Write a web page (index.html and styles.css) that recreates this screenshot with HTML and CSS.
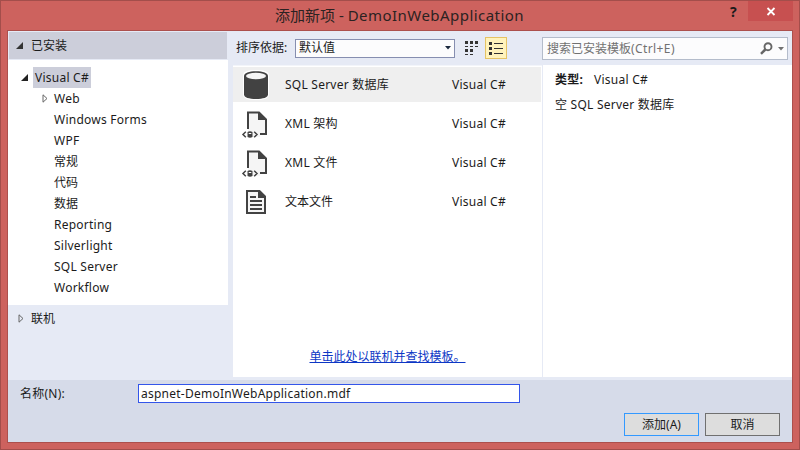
FILE: index.html
```
<!DOCTYPE html>
<html lang="zh-CN">
<head>
<meta charset="utf-8">
<title>添加新项 - DemoInWebApplication</title>
<link rel="stylesheet" href="styles.css">
</head>
<body>
<div class="window">
  <header class="titlebar">
    <h1 class="title">添加新项 - <span class="title-name">DemoInWebApplication</span></h1>
    <span class="help">?</span>
    <button class="close" aria-label="关闭"><svg width="10" height="9" viewBox="0 0 10 9"><path d="M1.500 1l7 7M8.500 1l-7 7" stroke="#fff" stroke-width="1.800"/></svg></button>
  </header>
  <div class="client">
    <main class="main">
      <nav class="sidebar">
        <div class="group open"><svg class="arrow" width="7" height="7"><path d="M7 0v7H0z" fill="#333"/></svg><span>已安装</span></div>
        <ul class="tree">
          <li class="root"><svg class="arrow" width="7" height="7"><path d="M7 0v7H0z" fill="#222"/></svg><span class="selected">Visual C#</span></li>
          <li class="expandable"><svg class="arrow" width="6" height="9"><path d="M1 .8v7.400l4-3.700z" fill="none" stroke="#666"/></svg>Web</li>
          <li>Windows Forms</li>
          <li>WPF</li>
          <li class="zh">常规</li>
          <li class="zh">代码</li>
          <li class="zh">数据</li>
          <li>Reporting</li>
          <li>Silverlight</li>
          <li>SQL Server</li>
          <li>Workflow</li>
        </ul>
        <div class="group online"><svg class="arrow" width="6" height="9"><path d="M1 .8v7.400l4-3.700z" fill="none" stroke="#666"/></svg><span>联机</span></div>
      </nav>
      <section class="templates">
        <div class="toolbar">
          <label class="zh">排序依据:</label>
          <div class="select zh"><span>默认值</span><svg width="6" height="4"><path d="M0 0h6L3 3.500z" fill="#1b293e"/></svg></div>
          <svg class="view" width="13" height="14" fill="#333"><path d="M0 0h3v3H0zM5 0h3v3H5zM10 0h3v3h-3zM0 8h3v3H0zM5 8h3v3H5z"/><path d="M0 5h3v1H0zM5 5h3v1H5zM10 5h3v1h-3zM0 13h3v1H0zM5 13h3v1H5z"/></svg>
          <div class="view-active"><svg width="14" height="13" fill="#333"><path d="M0 0h3v3H0zM0 5h3v3H0zM0 10h3v3H0zM5 1h9v1H5zM5 6h9v1H5zM5 11h9v1H5z"/></svg></div>
        </div>
        <div class="list">
          <div class="row active">
            <svg class="icon" width="32" height="32"><path d="M3 6q0-5 13-5t13 5v20q0 5-13 5T3 26z" fill="#fff"/><path d="M4 7c0-3 5-4.800 12-4.800S28 4 28 7v18.500c0 3-5 4.500-12 4.500S4 28.500 4 25.500z" fill="#424242"/><ellipse cx="16" cy="7" rx="10" ry="3.200" fill="#f5f5f5"/></svg>
            <span class="name">SQL Server 数据库</span><span class="lang">Visual C#</span>
          </div>
          <div class="row">
            <svg class="icon" width="32" height="32"><use href="#xml-file"/></svg>
            <span class="name">XML 架构</span><span class="lang">Visual C#</span>
          </div>
          <div class="row">
            <svg class="icon" width="32" height="32"><use href="#xml-file"/></svg>
            <span class="name">XML 文件</span><span class="lang">Visual C#</span>
          </div>
          <div class="row">
            <svg class="icon" width="32" height="32"><path d="M7 5h12.500L25 10.500V27H7z" fill="#f5f5f5" stroke="#424242" stroke-width="2"/><path d="M18 4v8h8zM10 10h6v2h-6zM10 14h12v2H10zM10 18h12v2H10zM10 22h12v2H10z" fill="#424242"/></svg>
            <span class="name zh">文本文件</span><span class="lang">Visual C#</span>
          </div>
          <a class="find" href="#">单击此处以联机并查找模板。</a>
        </div>
      </section>
      <aside class="details">
        <div class="search-wrap"><div class="search"><span class="hint">搜索已安装模板<span class="key">(Ctrl+E)</span></span>
          <svg width="13" height="13"><circle cx="8" cy="4.700" r="3.500" fill="none" stroke="#666" stroke-width="1.900"/><path d="M5.300 7.500L1 11.800" stroke="#666" stroke-width="2.500"/></svg>
          <svg class="caret" width="6" height="4"><path d="M0 0h6L3 3.500z" fill="#717171"/></svg></div></div>
        <div class="info">
          <p><b>类型:</b><span class="type">Visual C#</span></p>
          <p>空 SQL Server 数据库</p>
        </div>
      </aside>
    </main>
    <footer class="footer">
      <div class="name-row"><label>名称(N):</label><div class="field">aspnet-DemoInWebApplication.mdf</div></div>
      <div class="actions"><button class="btn primary">添加(A)</button><button class="btn">取消</button></div>
    </footer>
  </div>
</div>
<svg class="defs" width="0" height="0">
  <symbol id="xml-file" viewBox="0 0 32 32">
    <path d="M8 22V5h11l7 6v16h-6V29H8z" fill="#f5f5f5"/>
    <path d="M8 21V4.500h11L26 11.500V26h-6" fill="none" stroke="#424242" stroke-width="2"/><path d="M18 4l9 8h-9z" fill="#424242"/>
    <path d="M5.800 23.800L3 26.500l2.800 2.700M14.200 23.800l2.800 2.700-2.800 2.700" fill="none" stroke="#424242" stroke-width="1.500"/>
    <path d="M7.500 24q2.500-1.500 5 0v5q-2.500 1.300-5 0z" fill="#424242"/><path d="M8.700 25h2.600v1H8.700z" fill="#fff"/>
  </symbol>
</svg>
</body>
</html>
```

FILE: styles.css
```
* { box-sizing: border-box; }
body { margin: 0; font: 12px/20px "Noto Sans", "Noto Sans CJK SC", sans-serif; color: #1b1b1b; letter-spacing: 0.24px; }
h1, p, ul { margin: 0; padding: 0; font-weight: normal; }
ul { list-style: none; }
svg { display: block; flex: none; }
button { padding: 0; font: inherit; color: inherit; }
.zh { letter-spacing: 0; }
.defs { position: absolute; }
.window { width: 800px; height: 450px; display: flex; flex-direction: column; background: #cd625e; border: 1px solid #a34e4b; padding: 0 6px 6px; }
.titlebar { height: 29px; display: flex; align-items: flex-start; }
.title { flex: 1; padding: 3px 0 0 268px; font-size: 15px; line-height: 22px; letter-spacing: 0; white-space: nowrap; color: #2b2222; }
.title-name { letter-spacing: 0.46px; }
.help { width: 18px; font: bold 14px/21px "Noto Sans"; }
.close { width: 45px; height: 20px; border: 0; background: #c75050; display: flex; align-items: center; justify-content: center; }
.client { flex: 1; display: flex; flex-direction: column; border: 1px solid #ac504d; background: #e6eaf5; min-height: 0; }
.main { height: 349px; display: grid; grid-template-columns: 225px 309px 250px; }
.sidebar { display: flex; flex-direction: column; }
.group { display: flex; align-items: center; height: 27px; letter-spacing: 0; }
.open { margin: 1px 6px 1px 1px; background: #ccceda; padding-left: 7px; }
.open span { margin-left: 8px; }
.online { padding-left: 10px; }
.online span { margin-left: 7px; }
.tree { width: 220px; height: 245px; background: #fff; padding-top: 7px; }
.tree li { height: 21px; line-height: 21px; padding-left: 46px; }
.tree .root { display: flex; align-items: center; padding-left: 13px; }
.selected { margin-left: 5px; padding: 0 2px; background: #ccceda; }
.tree .expandable { display: flex; align-items: center; padding-left: 34px; }
.expandable svg { margin-right: 6px; }
.templates { display: flex; flex-direction: column; }
.toolbar { height: 34px; padding-left: 3px; display: flex; align-items: center; }
.toolbar label { width: 59px; }
.select { width: 160px; height: 19px; border: 1px solid #868eb0; background: #fcfcfd; padding: 0 3px; display: flex; align-items: center; justify-content: space-between; }
.view { margin: 0 7px 0 10px; }
.view-active { width: 22px; height: 22px; border: 1px solid #e5c365; background: #fff3bc; display: flex; align-items: center; justify-content: center; }
.list { height: 312px; background: #fff; padding-top: 1px; display: flex; flex-direction: column; border-top: 1px solid #f3f5fa; }
.row { height: 35px; margin-bottom: 4px; display: flex; align-items: center; }
.active { background: #efefef; margin-right: 1px; }
.icon { margin-left: 7px; }
.name { margin-left: 13px; width: 167px; }
.find { margin-top: 124px; align-self: center; color: #0d37c5; letter-spacing: 0; }
.details { display: flex; flex-direction: column; }
.search-wrap { height: 34px; padding: 6px 4px 5px 0; }
.search { height: 23px; border: 1px solid #b4bccb; background: #fcfcfd; padding: 0 3px 0 4px; display: flex; align-items: center; color: #717171; }
.hint { flex: 1; letter-spacing: 0; }
.key { letter-spacing: 0.4px; }
.caret { margin-left: 5px; }
.info { height: 312px; background: #fff; border-left: 1px solid #e6eaf5; padding: 5px 0 0 12px; }
.info p { height: 25px; line-height: 20px; }
.type { margin-left: 11px; }
.footer { flex: 1; background: #d6dbe9; }
.name-row { display: flex; height: 33px; padding: 4px 0 0 12px; }
.name-row label { width: 118px; }
.field { width: 382px; height: 19px; line-height: 18px; border: 1px solid #3355ea; background: #fff; padding-left: 2px; }
.actions { display: flex; justify-content: flex-end; gap: 6px; padding-right: 12px; }
.btn { width: 75px; height: 23px; border: 1px solid #707070; background: #ddd; }
.primary { border-color: #3399ff; }
```
